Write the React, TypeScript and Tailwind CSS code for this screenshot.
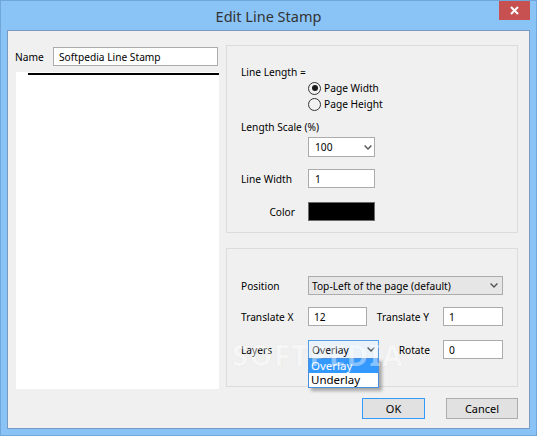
import React from "react";

const Chevron = () => (
  <svg width="8" height="5" viewBox="0 0 8 5" className="shrink-0">
    <path d="M0.6 0.6 L4 4 L7.4 0.6" fill="none" stroke="#555" strokeWidth="1.4" />
  </svg>
);

const Radio = ({ checked, label }: { checked?: boolean; label: string }) => (
  <div className="h-[16px] flex items-center">
    <span className="w-[13px] h-[13px] rounded-full border border-[#333] bg-[#f2f2f2] flex items-center justify-center">
      {checked && <span className="w-[6px] h-[6px] rounded-full bg-[#1a1a1a]" />}
    </span>
    <span className="ml-[3px]">{label}</span>
  </div>
);

export default function App() {
  return (
    <div className="w-[537px] h-[436px] bg-[#8ac4f6] border border-[#70a6da] flex flex-col font-['Noto_Sans','Open_Sans',sans-serif] text-[10.2px] leading-[16px] text-black relative overflow-hidden">
      {/* title bar */}
      <div className="h-[29px] relative flex items-center justify-center">
        <span className="text-[14.5px] leading-[18px] text-[#333]">Edit Line Stamp</span>
        <div className="absolute right-[6px] top-0 w-[31px] h-[19px] bg-[#c75050] flex items-center justify-center">
          <svg width="9" height="9" viewBox="0 0 9 9">
            <path d="M1 1 L8 8 M8 1 L1 8" stroke="#fff" strokeWidth="2" />
          </svg>
        </div>
      </div>

      {/* client */}
      <div className="ml-[6px] w-[523px] h-[399px] border border-[#7899c2] bg-[#f0f0f0] relative">
        <div className="flex pl-[7px]">
          {/* left column */}
          <div className="w-[204px] pt-[16px]">
            <div className="flex items-center h-[19px]">
              <span className="w-[38px]">Name</span>
              <div className="w-[165px] h-[19px] border border-[#ababab] bg-white pl-[5px] flex items-center">
                Softpedia Line Stamp
              </div>
            </div>
            <div className="mt-[6px] ml-[1px] w-[203px] h-[317px] bg-white pt-[1px] pl-[12px]">
              <div className="h-[1.5px] bg-black" />
            </div>
          </div>

          {/* right column */}
          <div className="ml-[7px] w-[292px] pt-[14px]">
            {/* group 1 */}
            <div className="h-[188px] border border-[#dcdcdc] pl-[14px] pt-[18px]">
              <div className="h-[16px]">Line Length =</div>
              <div className="pl-[67px]">
                <Radio checked label="Page Width" />
                <Radio label="Page Height" />
              </div>
              <div className="mt-[7px] h-[16px]">Length Scale (%)</div>
              <div className="ml-[67px] mt-[2px] w-[67px] h-[20px] border border-[#ababab] bg-white pl-[6px] pr-[2px] flex items-center justify-between">
                <span>100</span>
                <Chevron />
              </div>
              <div className="mt-[12px] flex items-center h-[19px]">
                <span className="w-[67px]">Line Width</span>
                <div className="w-[67px] h-[19px] border border-[#ababab] bg-white pl-[6px] flex items-center">1</div>
              </div>
              <div className="mt-[14px] flex items-center h-[19px]">
                <span className="w-[67px] text-right pr-[13px]">Color</span>
                <div className="w-[67px] h-[19px] border border-[#6b6b6b] bg-black" />
              </div>
            </div>

            {/* group 2 */}
            <div className="mt-[15px] h-[139px] border border-[#dcdcdc] pl-[14px] pt-[27px]">
              <div className="flex items-center h-[19px]">
                <span className="w-[67px]">Position</span>
                <div className="w-[195px] h-[19px] border border-[#acacac] bg-[#e6e6e6] pl-[3px] pr-[4px] flex items-center justify-between">
                  <span>Top-Left of the page (default)</span>
                  <Chevron />
                </div>
              </div>
              <div className="mt-[12px] flex items-center h-[19px]">
                <span className="w-[67px]">Translate X</span>
                <div className="w-[59px] h-[19px] border border-[#ababab] bg-white pl-[5px] flex items-center">12</div>
                <span className="w-[76px] text-right pr-[14px]">Translate Y</span>
                <div className="w-[60px] h-[19px] border border-[#ababab] bg-white pl-[5px] flex items-center">1</div>
              </div>
              <div className="mt-[14px] flex items-center h-[19px]">
                <span className="w-[67px]">Layers</span>
                <div className="relative w-[71px] h-[19px] border border-[#569de5] bg-[#eaf3fc] pl-[3px] pr-[3px] flex items-center justify-between">
                  <span>Overlay</span>
                  <Chevron />
                  <div className="absolute left-[-1px] top-full w-[71px] border border-[#4a8fdc] bg-white text-[11.5px] leading-[14px] shadow-[3px_3px_3px_rgba(0,0,0,0.3)] z-10">
                    <div className="h-[14px] bg-[#3399ff] text-white pl-[2px]">Overlay</div>
                    <div className="h-[14px] pl-[2px]">Underlay</div>
                  </div>
                </div>
                <span className="w-[64px] text-right pr-[13px]">Rotate</span>
                <div className="w-[60px] h-[19px] border border-[#ababab] bg-white pl-[5px] flex items-center">0</div>
              </div>
            </div>

            {/* buttons */}
            <div className="mt-[11px] flex justify-end gap-[21px]">
              <div className="w-[63px] h-[21px] border border-[#3399ff] bg-[#e1e1e1] flex items-center justify-center text-[11px]">OK</div>
              <div className="w-[72px] h-[21px] border border-[#adadad] bg-[#e1e1e1] flex items-center justify-center text-[11px]">Cancel</div>
            </div>
          </div>
        </div>

        {/* watermark */}
        <div className="absolute left-[224px] top-[309px] text-[29px] leading-[30px] font-bold tracking-[1.5px] text-white opacity-40 [text-shadow:0_0_1px_rgba(0,0,0,0.2)] pointer-events-none z-20">
          SOFTPEDIA
        </div>
      </div>
    </div>
  );
}
